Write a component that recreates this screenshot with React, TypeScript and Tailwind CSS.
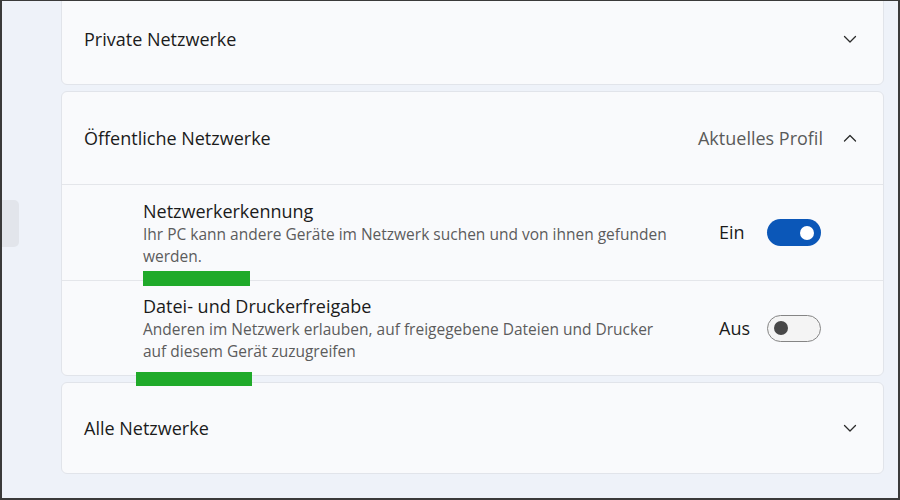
import React from "react";

const Chevron = ({ up = false }: { up?: boolean }) => (
  <svg width="16" height="16" viewBox="0 0 16 16" className="text-[#2b2b2b]">
    <path
      d={up ? "M2.5 11 L8 5.5 L13.5 11" : "M2.5 5.5 L8 11 L13.5 5.5"}
      fill="none"
      stroke="currentColor"
      strokeWidth="1.3"
      strokeLinecap="round"
      strokeLinejoin="round"
    />
  </svg>
);

const Toggle = ({ on }: { on: boolean }) =>
  on ? (
    <div className="flex h-[27px] w-[54px] items-center justify-end rounded-full bg-[#0b57b8] pr-[7px]">
      <div className="h-[14px] w-[14px] rounded-full bg-white" />
    </div>
  ) : (
    <div className="flex h-[27px] w-[54px] items-center rounded-full border border-[#858585] bg-[#f4f4f4] pl-[6px]">
      <div className="h-[14px] w-[14px] rounded-full bg-[#484848]" />
    </div>
  );

const SettingRow = ({
  title,
  desc,
  on,
}: {
  title: string;
  desc: string[];
  on: boolean;
}) => (
  <div className="flex items-center pl-[81px] pr-[62px]">
    <div className="flex-1">
      <div className="text-[18px] leading-[24px] text-[#1b1b1b]">{title}</div>
      {desc.map((line) => (
        <div key={line} className="text-[15.5px] leading-[22px] text-[#5c5c5c]">
          {line}
        </div>
      ))}
    </div>
    <span className="w-[48px] text-[18px] text-[#1b1b1b]">{on ? "Ein" : "Aus"}</span>
    <Toggle on={on} />
  </div>
);

export default function App() {
  return (
    <div
      className="h-[500px] w-[900px] bg-[#3a3a3a] px-[2px] pt-[1px] pb-[2px]"
      style={{ fontFamily: '"Open Sans", "Noto Sans", sans-serif' }}
    >
      <div className="flex h-full overflow-hidden bg-[#eef2f9]">
        <div className="w-[59px] shrink-0">
          <div className="mt-[199px] h-[47px] w-[17px] rounded-r-[5px] bg-[#e2e5eb]" />
        </div>

        <div className="relative -mt-[8px] flex w-[823px] flex-col gap-[6px]">
          <div className="flex h-[92px] items-center justify-between rounded-[6px] border border-[#e1e4ea] bg-[#f9fafc] pl-[22px] pr-[25px]">
            <span className="text-[18px] text-[#1b1b1b]">Private Netzwerke</span>
            <Chevron />
          </div>

          <div className="flex flex-col rounded-[6px] border border-[#e1e4ea] bg-[#f9fafc]">
            <div className="flex h-[92px] items-center pl-[22px] pr-[25px]">
              <span className="flex-1 text-[18px] text-[#1b1b1b]">Öffentliche Netzwerke</span>
              <span className="mr-[19px] text-[18px] text-[#5a5a5a]">Aktuelles Profil</span>
              <Chevron up />
            </div>
            <div className="flex h-[96px] flex-col justify-center border-t border-[#e4e6ea]">
              <SettingRow
                title="Netzwerkerkennung"
                desc={[
                  "Ihr PC kann andere Geräte im Netzwerk suchen und von ihnen gefunden",
                  "werden.",
                ]}
                on
              />
            </div>
            <div className="flex h-[95px] flex-col justify-center border-t border-[#e4e6ea]">
              <SettingRow
                title="Datei- und Druckerfreigabe"
                desc={[
                  "Anderen im Netzwerk erlauben, auf freigegebene Dateien und Drucker",
                  "auf diesem Gerät zuzugreifen",
                ]}
                on={false}
              />
            </div>
          </div>

          <div className="flex h-[92px] items-center justify-between rounded-[6px] border border-[#e1e4ea] bg-[#f9fafc] pl-[22px] pr-[25px]">
            <span className="text-[18px] text-[#1b1b1b]">Alle Netzwerke</span>
            <Chevron />
          </div>

          <div className="absolute left-[82px] top-[278px] h-[15px] w-[107px] bg-[#20aa2a]" />
          <div className="absolute left-[75px] top-[379px] h-[14px] w-[116px] bg-[#20aa2a]" />
        </div>
      </div>
    </div>
  );
}
